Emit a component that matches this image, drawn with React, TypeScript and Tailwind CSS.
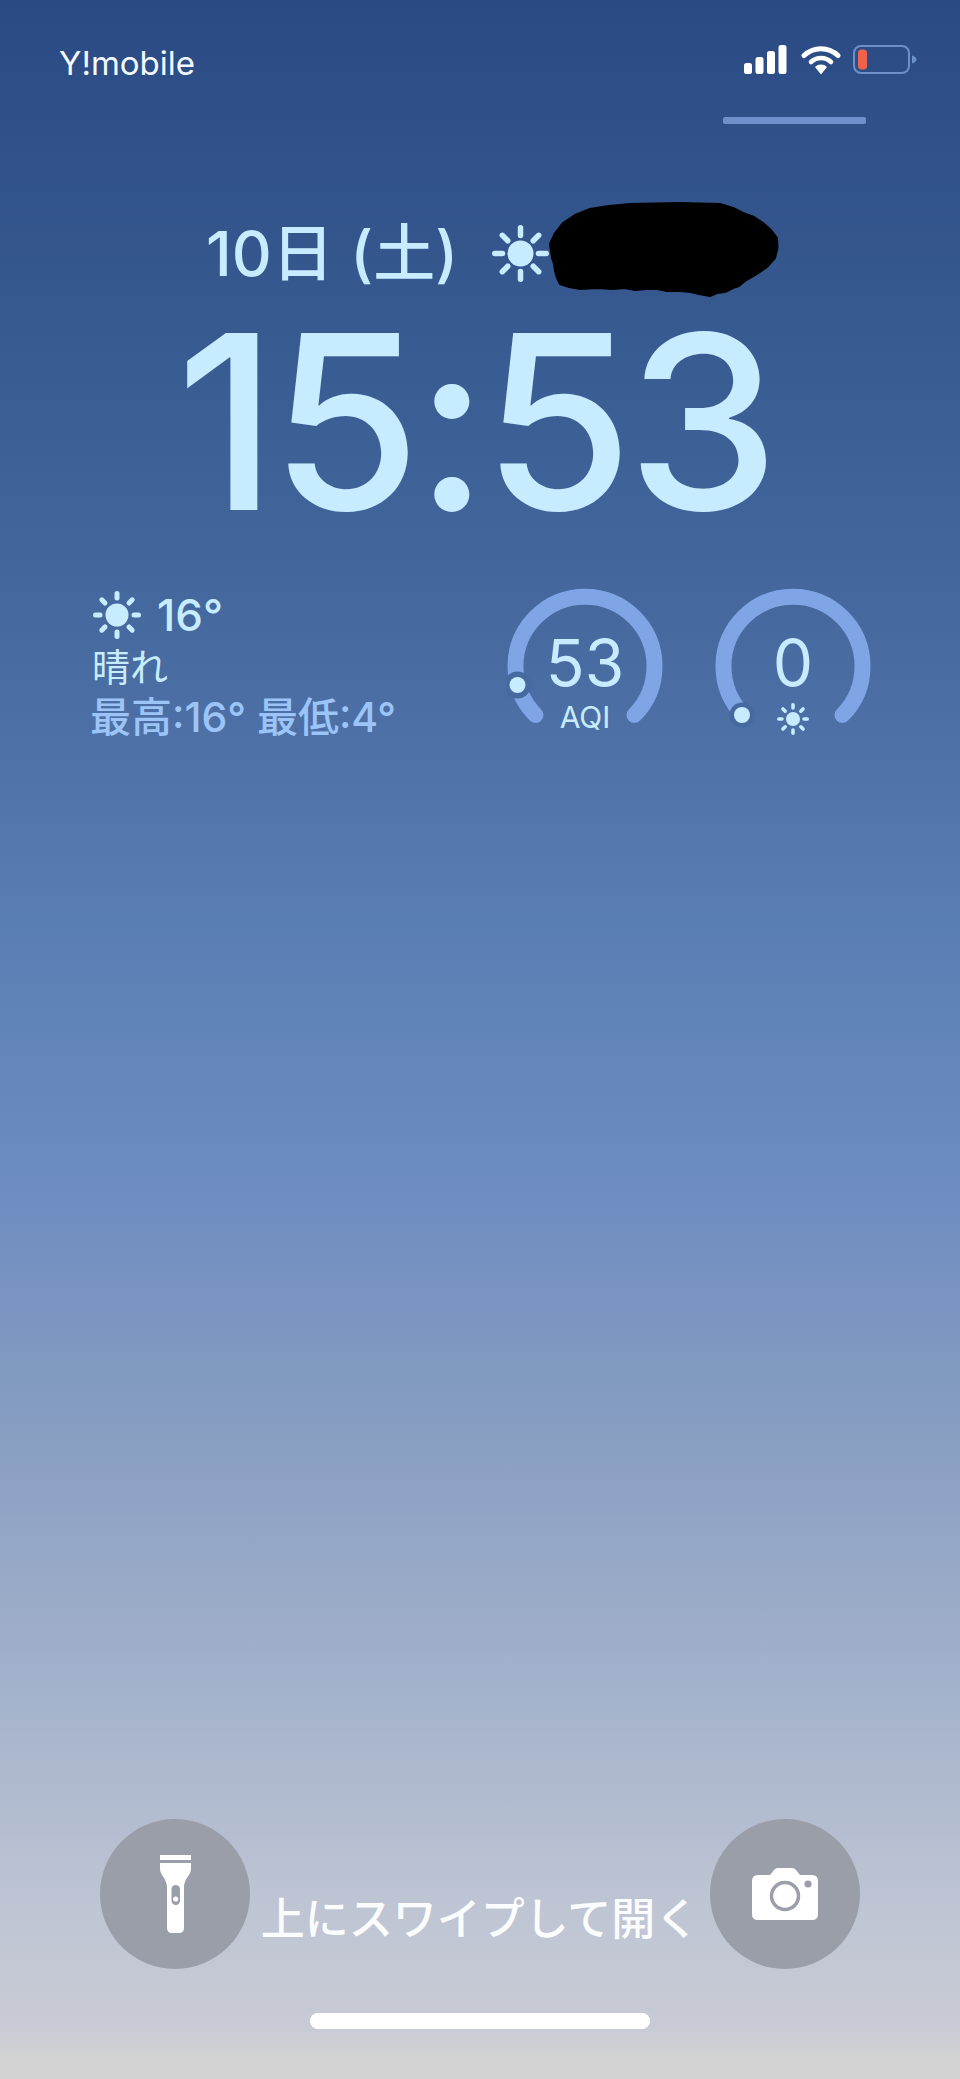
const CJK = "font-['Inter','Noto_Sans_CJK_JP',sans-serif]";

function Sun({ size, core, inner, width }: { size: number; core: number; inner: number; width: number }) {
  const c = size / 2;
  const rays = [0, 45, 90, 135, 180, 225, 270, 315];
  return (
    <svg width={size} height={size} viewBox={`0 0 ${size} ${size}`} className="shrink-0">
      <circle cx={c} cy={c} r={core} fill="#c8ecff" />
      {rays.map((a) => (
        <line
          key={a}
          x1={c}
          y1={c - inner}
          x2={c}
          y2={width / 2}
          stroke="#c8ecff"
          strokeWidth={width}
          strokeLinecap="round"
          transform={`rotate(${a} ${c} ${c})`}
        />
      ))}
    </svg>
  );
}

function Gauge({ value, label, dot }: { value: string; label: React.ReactNode; dot: "mid" | "start" }) {
  return (
    <div className="relative h-[145px] w-[156px]">
      <svg width="156" height="145" viewBox="0 0 156 145" className="absolute left-0 top-0">
        <path
          d="M28.5 127 A69.5 69.5 0 1 1 127.5 127"
          fill="none"
          stroke="#7fa5e4"
          strokeWidth="16"
          strokeLinecap="round"
        />
        {dot === "mid" ? (
          <>
            <circle cx="10.5" cy="97" r="13.5" fill="#46699f" />
            <circle cx="10.5" cy="97" r="8" fill="#c8ecff" />
          </>
        ) : (
          <>
            <circle cx="27" cy="127" r="12.5" fill="#46699f" />
            <circle cx="27" cy="127" r="8" fill="#c8ecff" />
          </>
        )}
      </svg>
      <div className="absolute inset-x-0 top-[37px] text-center text-[64px] leading-[75px] text-[#c8ecff]">{value}</div>
      <div className="absolute inset-x-0 top-[113px] flex h-[32px] items-center justify-center text-[30px] text-[#c8ecff]">
        {label}
      </div>
    </div>
  );
}

export default function App() {
  return (
    <div
      className={`${CJK} flex h-[2079px] w-[960px] flex-col overflow-hidden bg-[linear-gradient(180deg,#2b4a85_0%,#36598f_15%,#46699f_30%,#5a7fb4_45%,#6f8dc0_58%,#8aa0c2_70%,#a5b3cc_82%,#bfc5d3_92%,#c8cbd5_97.5%,#d2d2d2_99%)]`}
    >
      <div className="flex h-[79px] items-end justify-between pl-[59px] pr-[43px]">
        <span className="mb-[-6px] text-[33px] leading-[44px] text-[#f4f8ff]">Y!mobile</span>
        <div className="flex items-center gap-[13px] pb-[4px]">
          <svg width="44" height="29" viewBox="0 0 44 29">
            <rect x="0" y="18" width="8" height="11" rx="2.5" fill="#fff" />
            <rect x="11.5" y="12" width="8" height="17" rx="2.5" fill="#fff" />
            <rect x="23" y="6" width="8" height="23" rx="2.5" fill="#fff" />
            <rect x="34.5" y="0" width="8" height="29" rx="2.5" fill="#fff" />
          </svg>
          <svg width="40" height="31" viewBox="0 0 40 31">
            <path d="M3 11.5 A24.5 24.5 0 0 1 37 11.5" fill="none" stroke="#fff" strokeWidth="5" strokeLinecap="round" />
            <path d="M10 18 A14.5 14.5 0 0 1 30 18" fill="none" stroke="#fff" strokeWidth="4.6" strokeLinecap="round" />
            <path d="M14 23 L20 30.5 L26 23 A8.5 8.5 0 0 0 14 23 Z" fill="#fff" />
          </svg>
          <svg width="64" height="29" viewBox="0 0 64 29" className="-ml-[1px]">
            <rect x="1" y="1" width="55" height="27" rx="7" fill="none" stroke="#6d90c8" strokeWidth="2" />
            <rect x="5" y="4.5" width="9" height="20" rx="3.5" fill="#f0634a" />
            <path d="M59 10.5 C62 11.5 63.5 13 63.5 14.5 C63.5 16 62 17.5 59 18.5 Z" fill="#6d90c8" />
          </svg>
        </div>
      </div>

      <div className="flex justify-end pr-[94px] pt-[38px]">
        <div className="h-[7px] w-[143px] rounded-[2px] bg-[#7090cc]" />
      </div>

      <div className="mt-[81px] flex h-[97px] items-center pl-[206px] text-[#c8ecff]">
        <span className="text-[62px] font-medium leading-[70px]">10日 (土)</span>
        <div className="ml-[34px]">
          <Sun size={57} core={13} inner={18} width={5.5} />
        </div>
        <svg width="230" height="96" viewBox="0 0 230 96" className="-mt-[8px] shrink-0">
          <path
            d="M1 42 L6 31 L14 21 L26 13 L41 7 L60 4 L81 2 L131 1 L171 2 L184 6 L194 11 L205 15 L214 21 L222 28 L228 36 L228.5 46 L226 56 L218 65 L208 72 L196 79 L190 84 L184 86 L176 90 L168 91 L161 94 L150 92 L142 90 L131 89 L118 89 L108 87 L98 87 L86 88 L76 86 L64 87 L48 86 L31 87 L20 85 L11 82 L8 76 L6 69 L5 62 L3 56 Z"
            fill="#000"
            stroke="#000"
            strokeWidth="2"
            strokeLinejoin="round"
          />
        </svg>
      </div>

      <div className="mt-[10px] pl-[176px] text-[243px] font-[550] leading-[220px] tracking-[-6px] text-[#c8ecff]">
        15:53
      </div>

      <div className="mt-[56px] flex items-start pl-[91px]">
        <div className="w-[416px] pt-[2px]">
          <div className="flex h-[50px] items-center gap-[16px] pl-[2px] text-[#c8ecff]">
            <Sun size={48} core={11.5} inner={17} width={5} />
            <span className="text-[44px] font-[550] leading-[50px]">16°</span>
          </div>
          <div className="mt-[4px] h-[47px] pl-[1px] text-[38px] leading-[47px] text-[#c8ecff]">晴れ</div>
          <div className="mt-[3px] -ml-[1px] whitespace-nowrap text-[41px] font-[550] leading-[47px] text-[#9cc4f6]">
            最高:16° 最低:4°
          </div>
        </div>
        <Gauge value="53" label="AQI" dot="mid" />
        <div className="ml-[52px]">
          <Gauge
            value="0"
            dot="start"
            label={
              <div className="mt-[3px] -ml-[1px]">
                <Sun size={32} core={7} inner={11} width={3.5} />
              </div>
            }
          />
        </div>
      </div>

      <div className="mt-auto flex items-start justify-between px-[100px]">
        <div className="flex h-[150px] w-[150px] items-center justify-center rounded-full bg-[#9a9ea9]">
          <svg width="31" height="78" viewBox="0 0 31 78">
            <rect x="0" y="0" width="31" height="5" fill="#fff" />
            <path d="M0 8 H31 V14 C31 20 24 24 24 32 V73 Q24 78 19 78 H12 Q7 78 7 73 V32 C7 24 0 20 0 14 Z" fill="#fff" />
            <rect x="11.5" y="30" width="8.5" height="20" rx="4.2" fill="#9a9ea9" />
            <circle cx="15.7" cy="44" r="2.6" fill="#fff" />
          </svg>
        </div>
        <span className="whitespace-nowrap pt-[70px] text-[44px] font-[550] leading-[60px] text-[#fbfcfe]">
          上にスワイプして開く
        </span>
        <div className="flex h-[150px] w-[150px] items-center justify-center rounded-full bg-[#9a9ea9]">
          <svg width="66" height="52" viewBox="0 0 66 52">
            <path
              d="M6 7 H18 L22 2 Q23.5 0 26 0 H40 Q42.5 0 44 2 L48 7 H60 Q66 7 66 13 V46 Q66 52 60 52 H6 Q0 52 0 46 V13 Q0 7 6 7 Z"
              fill="#fff"
            />
            <circle cx="33" cy="28" r="13.5" fill="none" stroke="#9a9ea9" strokeWidth="3.5" />
            <circle cx="56" cy="16" r="3.6" fill="#9a9ea9" />
          </svg>
        </div>
      </div>

      <div className="flex justify-center pb-[50px] pt-[44px]">
        <div className="h-[16px] w-[340px] rounded-full bg-white" />
      </div>
    </div>
  );
}
